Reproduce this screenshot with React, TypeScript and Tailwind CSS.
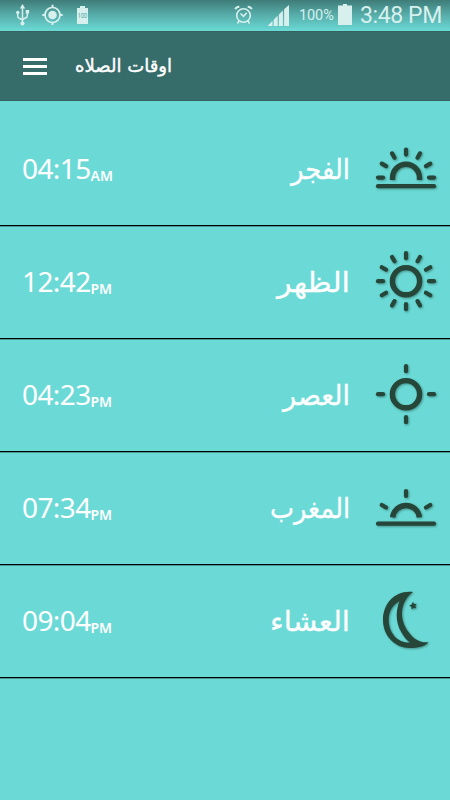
import type { ReactNode } from "react";

const ALL_RAYS = [0, 30, 60, 90, 120, 150, 180, 210, 240, 270, 300, 330];

function Rays({ cy, angles }: { cy: number; angles: number[] }) {
  return (
    <>
      {angles.map((angle) => (
        <path
          key={angle}
          d={`M32 ${cy - 28}v5`}
          transform={`rotate(${angle} 32 ${cy})`}
          strokeWidth="4.2"
          strokeLinecap="round"
        />
      ))}
    </>
  );
}

function PrayerIcon({ children }: { children: ReactNode }) {
  return (
    <svg
      viewBox="0 0 64 64"
      fill="none"
      stroke="#264639"
      className="h-16 w-16 drop-shadow-[1px_1px_1px_rgba(30,70,60,0.5)]"
    >
      {children}
    </svg>
  );
}

function FajrIcon() {
  return (
    <PrayerIcon>
      <Rays cy={40.6} angles={[270, 300, 330, 0, 30, 60, 90]} />
      <path d="M18.5 43v-2.200a13.500 13.500 0 0 1 27 0V43" strokeWidth="5.4" />
      <path d="M4 49.2h56" strokeWidth="4.2" strokeLinecap="round" />
    </PrayerIcon>
  );
}

function DhuhrIcon() {
  return (
    <PrayerIcon>
      <Rays cy={31.2} angles={ALL_RAYS} />
      <circle cx="32" cy="31.2" r="13.6" strokeWidth="5.4" />
    </PrayerIcon>
  );
}

function AsrIcon() {
  return (
    <PrayerIcon>
      <Rays cy={31.2} angles={[0, 90, 180, 270]} />
      <circle cx="32" cy="31.2" r="13.6" strokeWidth="5.4" />
    </PrayerIcon>
  );
}

function MaghribIcon() {
  return (
    <PrayerIcon>
      <Rays cy={43} angles={[300, 0, 60]} />
      <path d="M18.6 41.300a13.500 13.500 0 0 1 26.800 0" strokeWidth="5.4" />
      <path d="M4 47.7h56" strokeWidth="4.2" strokeLinecap="round" />
    </PrayerIcon>
  );
}

function IshaIcon() {
  return (
    <PrayerIcon>
      <path
        d="M39 3C21 1 9 14.500 9 31C9 47 21 59 36 59C44 59 51 57.500 54.500 53.200C46 54 41 50.500 36.500 45.500C30 38 27.700 31 28 23C28.500 14.500 33 7.500 39 3ZM25.500 12.300C21.500 22 21.500 33.500 27.500 43.500C30 48 33 51.500 36 53.500C24 54.500 14.700 44 14.700 31C14.700 22.500 18.500 16 25.500 12.300Z"
        fill="#264639"
        fillRule="evenodd"
        stroke="none"
      />
      <path
        d="M39 12.700l1.100 2.200 2.600-.1-1.400 2.200.9 2.300-2.500-.4-2 1.600-.3-2.500-2.200-1.400 2.400-1.100z"
        fill="#264639"
        stroke="none"
      />
    </PrayerIcon>
  );
}

const prayers = [
  { id: "fajr", name: "الفجر", width: 59, time: "04:15", period: "AM", icon: <FajrIcon /> },
  { id: "dhuhr", name: "الظهر", width: 73, time: "12:42", period: "PM", icon: <DhuhrIcon /> },
  { id: "asr", name: "العصر", width: 67, time: "04:23", period: "PM", icon: <AsrIcon /> },
  { id: "maghrib", name: "المغرب", width: 80, time: "07:34", period: "PM", icon: <MaghribIcon /> },
  { id: "isha", name: "العشاء", width: 80, time: "09:04", period: "PM", icon: <IshaIcon /> },
];

function StatusBar() {
  return (
    <div className="flex h-[31px] items-start bg-linear-to-b from-[#3f7c79] via-[#55aaa6] via-45% to-[#6bdad6] text-[#d7f0ee]">
      <svg width="14" height="22" viewBox="0 0 14 22" className="mt-[4px] ml-[16px]" fill="none" stroke="currentColor" strokeWidth="1.5">
        <path d="M6.500 4v15M1.700 9v3q0 2 2 2.500l2.800 1.500M11.300 9v2.500q0 2-2 2.500l-2.800 1.500" />
        <path d="M6.500 0l2.700 4.500H3.800z" fill="currentColor" stroke="none" />
        <circle cx="6.5" cy="19.500" r="2" fill="currentColor" stroke="none" />
        <circle cx="1.8" cy="8.500" r="1.7" fill="currentColor" stroke="none" />
        <path d="M9.700 6h3.400v3.500H9.700z" fill="currentColor" stroke="none" />
      </svg>
      <svg width="22" height="22" viewBox="0 0 22 22" className="mt-[4px] ml-[12px]" fill="none" stroke="currentColor" strokeWidth="1.7">
        <circle cx="10.5" cy="11" r="7.5" />
        <circle cx="10.5" cy="11" r="4.3" fill="currentColor" stroke="none" />
        <path d="M10.500 .8v3M10.500 18v3M.3 11h3M17.700 11h3" strokeWidth="2" />
      </svg>
      <svg width="12" height="18" viewBox="0 0 12 18" className="mt-[6px] ml-[13px]">
        <path d="M3 0h5v2h3v16H0V2h3z" fill="currentColor" />
        <text x="5.5" y="12.200" textAnchor="middle" textLength="9.500" lengthAdjust="spacingAndGlyphs" fontSize="7" fill="#4ba7a3" className="font-['Roboto',sans-serif]">100</text>
      </svg>
      <svg width="20" height="20" viewBox="0 0 20 20" className="mt-[5px] ml-[145px]" fill="none" stroke="currentColor" strokeWidth="1.6">
        <circle cx="9.5" cy="10.500" r="6.8" />
        <path d="M1.300 4.200q.7-2.300 4-2.500M17.700 4.200q-.7-2.300-4-2.500" strokeWidth="2" />
        <path d="M6.500 8.500l3 2.800 3.300-3.500M5 16l-1.500 2.500M14 16l1.500 2.500" />
      </svg>
      <svg width="22" height="21" viewBox="0 0 22 21" className="mt-[5px] ml-[14px]" fill="currentColor">
        <path d="M0 21v-.5l4.500-4.500v5zM5.700 21v-6.300l4-4V21zM10.900 21V9.500l4-4V21zM16.100 21V4.300L21 0v21z" />
      </svg>
      <span className="mt-[6px] ml-[9px] w-[36px] whitespace-nowrap font-['Roboto',sans-serif] text-[14.5px] leading-[19px] tracking-[-0.1px]">100%</span>
      <svg width="14" height="21" viewBox="0 0 14 21" className="mt-[4px] ml-[3px]" fill="currentColor">
        <path d="M5 0h4v1.500h5V21H0V1.500h5z" />
      </svg>
      <span className="mt-[2px] ml-[8px] whitespace-nowrap font-['Roboto',sans-serif] text-[23px] leading-[27px] tracking-[-0.4px]">3:48 PM</span>
    </div>
  );
}

function Header() {
  return (
    <header className="flex h-[70px] items-center border-y border-[#35615f] bg-[#366c69]">
      <button aria-label="Menu" className="ml-[23px] flex w-6 flex-col gap-1">
        <span className="h-[3px] bg-white" />
        <span className="h-[3px] bg-white" />
        <span className="h-[3px] bg-white" />
      </button>
      <svg width="98" height="34" className="ml-[28px] overflow-visible" fill="white" stroke="white" strokeWidth="0.4">
        <text x="97" y="22.500" direction="rtl" textLength="97" lengthAdjust="spacingAndGlyphs" className="font-['DejaVu_Sans',sans-serif] text-[18px]">
          اوقات الصلاه
        </text>
      </svg>
    </header>
  );
}

export default function App() {
  return (
    <div className="h-[800px] w-[450px] overflow-hidden bg-[#6bdad6] text-white">
      <StatusBar />
      <Header />
      <main className="pt-3">
        {prayers.map((prayer) => (
          <div
            key={prayer.id}
            className="flex h-[113px] items-center border-b border-black pr-3 pl-[22px] shadow-[0_1px_0_rgba(0,0,0,0.3)]"
          >
            <div className="flex items-baseline pb-[2px] font-['Noto_Sans',sans-serif]">
              <span className="text-[28px] leading-9 tracking-[-0.6px]">{prayer.time}</span>
              <span className="relative top-[2px] text-[14px] font-semibold tracking-[-0.1px]">{prayer.period}</span>
            </div>
            <svg width={prayer.width} height="50" className="ml-auto overflow-visible" fill="white" stroke="white" strokeWidth="0.3">
              <text
                x={prayer.width}
                y="34.5"
                direction="rtl"
                textLength={prayer.width}
                lengthAdjust="spacingAndGlyphs"
                className="font-['DejaVu_Sans',sans-serif] text-[28px]"
              >
                {prayer.name}
              </text>
            </svg>
            <div className="ml-6">{prayer.icon}</div>
          </div>
        ))}
      </main>
    </div>
  );
}
